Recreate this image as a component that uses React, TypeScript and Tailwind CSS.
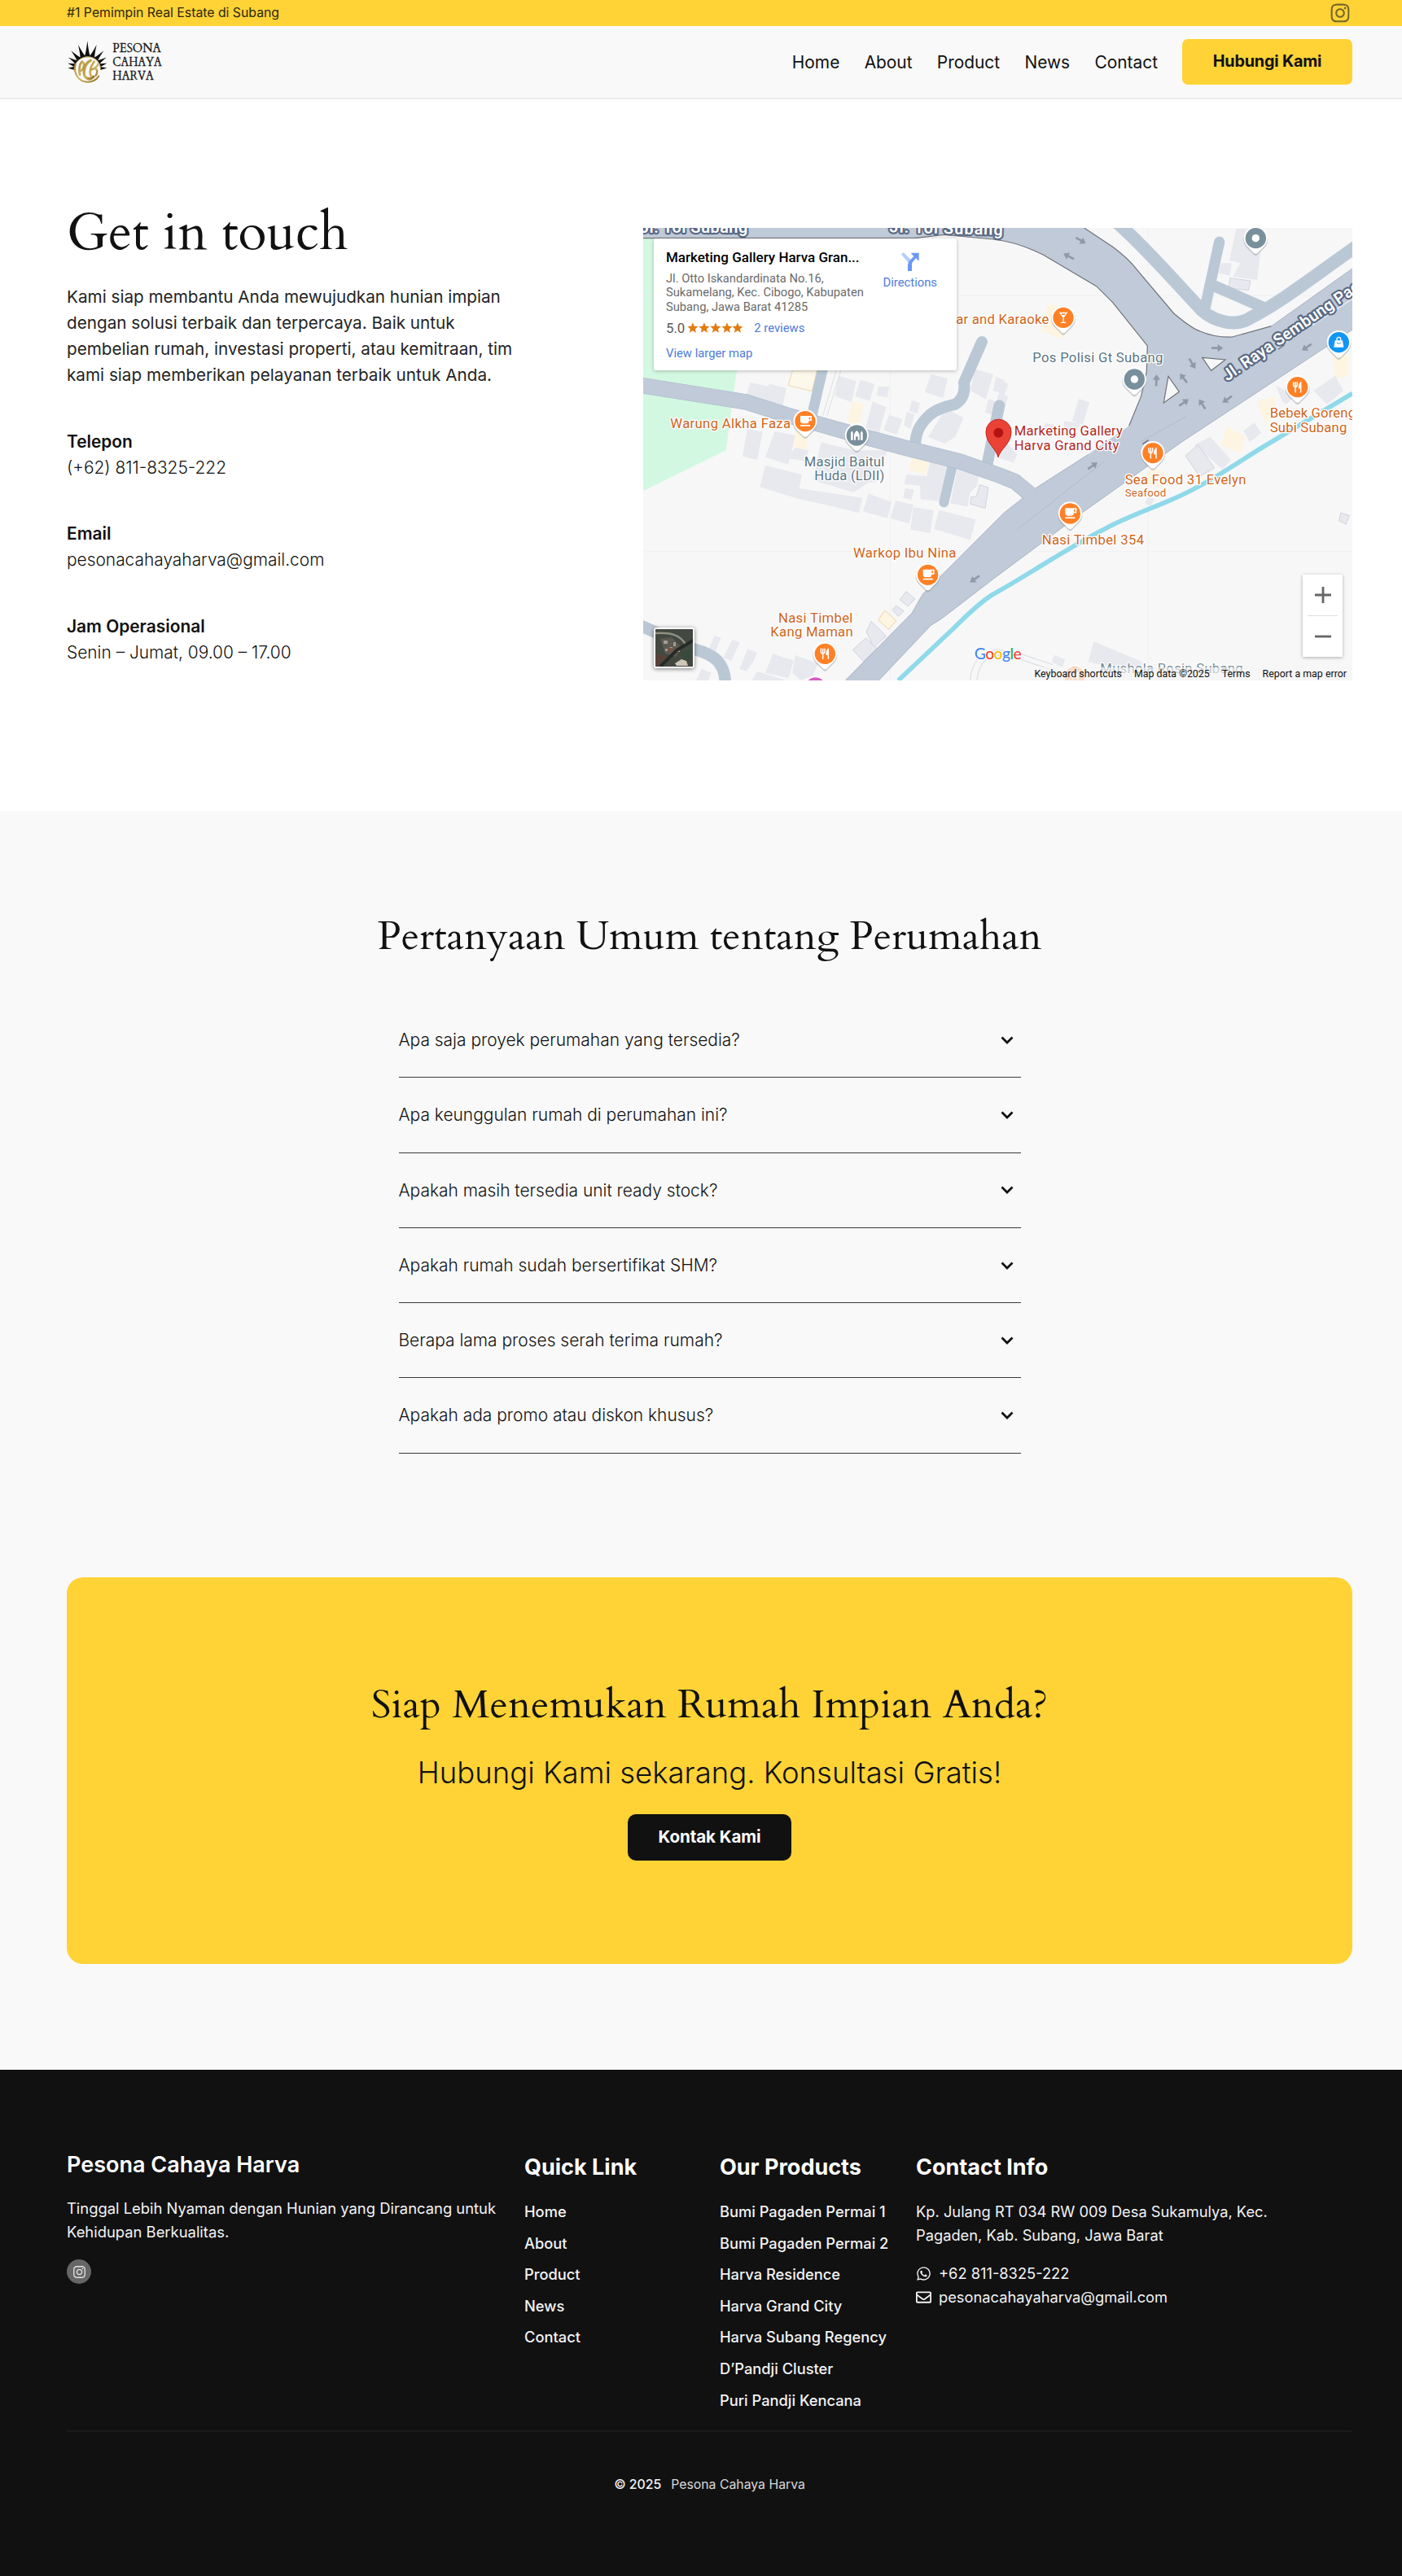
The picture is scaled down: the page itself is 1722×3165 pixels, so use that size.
import React from 'react';
import { FaInstagram, FaWhatsapp, FaRegEnvelope } from 'react-icons/fa';
import { MdStar } from 'react-icons/md';

const NAV = ['Home', 'About', 'Product', 'News', 'Contact'];

const CONTACTS = [
  { label: 'Telepon', value: '(+62) 811-8325-222' },
  { label: 'Email', value: 'pesonacahayaharva@gmail.com' },
  { label: 'Jam Operasional', value: 'Senin – Jumat, 09.00 – 17.00' },
];

const FAQS = [
  'Apa saja proyek perumahan yang tersedia?',
  'Apa keunggulan rumah di perumahan ini?',
  'Apakah masih tersedia unit ready stock?',
  'Apakah rumah sudah bersertifikat SHM?',
  'Berapa lama proses serah terima rumah?',
  'Apakah ada promo atau diskon khusus?',
];

const PRODUCTS = [
  'Bumi Pagaden Permai 1',
  'Bumi Pagaden Permai 2',
  'Harva Residence',
  'Harva Grand City',
  'Harva Subang Regency',
  'D’Pandji Cluster',
  'Puri Pandji Kencana',
];

// Crown of rays: [valley angle, tip angle, tip radius], clockwise from the lower left.
const RAYS: [number, number, number][] = [
  [-94, -87, 72],
  [-81, -74, 75],
  [-67, -59, 82],
  [-51, -42, 90],
  [-32, -21, 95],
  [-11, 0, 103],
  [11, 21, 95],
  [32, 42, 90],
  [51, 59, 82],
  [67, 74, 75],
  [81, 87, 72],
];

function polar(angle: number, r: number) {
  const a = (angle * Math.PI) / 180;
  return `${(112 + r * Math.sin(a)).toFixed(1)} ${(165 - r * Math.cos(a)).toFixed(1)}`;
}

const RAY_PATH =
  `M${polar(-94, 50)} ` +
  RAYS.map(([valley, tip, r], i) => {
    const next = i < RAYS.length - 1 ? RAYS[i + 1][0] : 94;
    const left = tip - (tip - valley) * 0.45;
    const right = tip + (next - tip) * 0.45;
    return `Q${polar(left, 60)} ${polar(tip, r)} Q${polar(right, 60)} ${polar(next, 50)}`;
  }).join(' ') +
  ` A48 48 0 0 0 ${polar(-94, 48)}Z`;

function Logo() {
  return (
    <svg className="block h-[54px] w-[119px]" viewBox="36 58 357 162">
      <defs>
        <linearGradient id="gold" x1="0" y1="0" x2="1" y2="1">
          <stop offset="0" stopColor="#a98a3c" />
          <stop offset="0.5" stopColor="#d0b25c" />
          <stop offset="1" stopColor="#93722a" />
        </linearGradient>
      </defs>
      <path fill="#111" d={RAY_PATH} />
      <g fill="none" stroke="url(#gold)" strokeLinecap="round">
        <path strokeWidth="3" d="M63 172 C62 138 88 121 114 121 C142 121 160 142 161 168" />
        <path strokeWidth="6" d="M68 148 C60 180 78 212 112 213 C132 213 146 204 154 192" />
        <path strokeWidth="8" d="M84 186 C80 166 84 146 92 138 C104 142 100 164 88 172" />
        <path strokeWidth="10" d="M124 134 C100 146 90 190 112 200 C120 203 128 200 134 194" />
        <path strokeWidth="8" d="M137 138 C124 156 120 176 124 190" />
        <path strokeWidth="7" d="M152 146 C148 158 138 164 128 168 M140 164 C150 166 150 180 142 190" />
      </g>
      <g className="font-['Cardo','Liberation_Serif',serif]" fill="#151515" stroke="#151515" strokeWidth="0.8" fontSize="43">
        <text x="205" y="102" textLength="178" lengthAdjust="spacingAndGlyphs">PESONA</text>
        <text x="205" y="154" textLength="181" lengthAdjust="spacingAndGlyphs">CAHAYA</text>
        <text x="205" y="206" textLength="151" lengthAdjust="spacingAndGlyphs">HARVA</text>
      </g>
    </svg>
  );
}

type Kind = 'cup' | 'fork' | 'drink' | 'dot' | 'mosque' | 'bag' | 'none';

const PIN_FILL: Record<Kind, string> = {
  cup: '#ff8126',
  fork: '#ff8126',
  drink: '#ff8126',
  dot: '#78909c',
  mosque: '#78909c',
  bag: '#1196f5',
  none: '#d45bc4',
};

function Pin({ x, y, kind }: { x: number; y: number; kind: Kind }) {
  return (
    <g transform={`translate(${x} ${y})`}>
      <path d="M-45 2 A45 45 0 1 1 45 2 C45 28 20 40 8 56 Q0 64 -8 56 C-20 40 -45 28 -45 2Z" fill="#8f959c" opacity="0.45" transform="translate(0 4)" />
      <path d="M-44 0 A44 44 0 1 1 44 0 C44 26 20 38 8 54 Q0 60 -8 54 C-20 38 -44 26 -44 0Z" fill="#fff" />
      <circle r="38" fill={PIN_FILL[kind]} />
      {kind === 'cup' && (
        <g fill="#fff">
          <path d="M-18 -20 H24 V-2 H14 Q14 8 4 8 H-8 Q-18 8 -18 -2Z" />
          <path d="M14 -15 H19 V-7 H14Z" fill="#ff8126" />
          <rect x="-18" y="13" width="36" height="5" />
        </g>
      )}
      {kind === 'fork' && (
        <g fill="none" stroke="#fff" strokeWidth="4.5" strokeLinecap="round">
          <path d="M-15 -18 V-8 Q-15 -1 -8 -1 Q-1 -1 -1 -8 V-18 M-8 -18 V18" />
          <path d="M12 18 V-17 Q5 -12 6 3 H12" fill="#fff" />
        </g>
      )}
      {kind === 'drink' && (
        <path d="M-16 -20 H16 L2 0 V16 H9 V20 H-9 V16 H-2 V0Z M-8 -15 L-5 -10 H5 L8 -15Z" fill="#fff" fillRule="evenodd" />
      )}
      {kind === 'dot' && <circle r="14" fill="#fff" />}
      {kind === 'mosque' && (
        <path d="M-22 17 V-10 L-18 -17 L-14 -10 V17Z M14 17 V-10 L18 -17 L22 -10 V17Z M-10 17 V-4 Q-8 -12 0 -18 Q8 -12 10 -4 V17 H4 V6 Q0 0 -4 6 V17Z" fill="#fff" />
      )}
      {kind === 'bag' && (
        <>
          <path d="M-14 -7 H14 L18 18 H-18Z" fill="#fff" />
          <path d="M-7 -6 V-12 Q-7 -19 0 -19 Q7 -19 7 -12 V-6" fill="none" stroke="#fff" strokeWidth="4" />
          <path d="M-7 1 Q0 9 7 1" fill="none" stroke="#1196f5" strokeWidth="3" />
        </>
      )}
    </g>
  );
}

const BUILDINGS = [
  '395,570 465,585 450,632 380,615',
  '465,575 528,590 512,665 440,645',
  '722,545 785,565 768,642 706,620',
  '800,560 852,575 835,638 780,620',
  '866,585 906,585 900,625 860,618',
  '1060,540 1122,555 1105,628 1038,605',
  '1222,520 1290,540 1262,632 1205,600',
  '1300,550 1330,560 1330,610 1288,600',
  '1272,630 1330,650 1320,700 1260,680',
  '990,635 1020,645 1010,685 980,675',
  '845,640 895,660 870,755 820,735',
  '905,690 955,705 935,762 885,745',
  '970,678 1000,688 985,740 960,728',
  '1115,665 1180,700 1150,770 1110,795 1050,770',
  '383,740 440,752 420,855 366,842',
  '485,750 560,765 535,872 450,845',
  '640,770 660,770 655,775 630,765',
  '560,810 610,820 600,860 530,848',
  '655,790 780,820 900,820 885,860 865,935 830,940 775,975 625,930',
  '450,875 585,910 575,960 808,995 795,1050 560,995 430,955',
  '830,980 915,1010 900,1070 810,1045',
  '930,1005 995,1020 980,1090 910,1070',
  '995,1030 1070,1040 1058,1125 985,1112',
  '1090,1040 1226,1075 1205,1150 1072,1110',
  '1062,840 1135,857 1115,1010 1022,1000 1020,950 962,945 970,910 1045,915',
  '1160,875 1240,900 1230,950 1205,975 1195,1028 1132,1015',
  '965,960 998,965 988,1003 958,995',
  '1310,760 1378,835 1365,865 1300,845',
  '1310,555 1345,575 1330,620 1300,600',
  '1310,610 1345,620 1330,670 1298,655',
  '1605,630 1645,642 1620,725 1580,712',
  '1480,720 1515,725 1505,750 1475,745',
  '1550,712 1612,720 1600,745 1550,735',
  '2185,3 2285,5 2262,192 2172,180 2200,130 2160,120',
  '2130,130 2168,130 2162,176 2120,168',
  '2330,580 2400,620 2370,650 2355,640',
  '2252,718 2278,755 2235,790 2212,748',
  '2550,545 2580,600 2520,650 2470,600',
  '2090,770 2165,855 2135,890 2030,800',
  '2000,840 2050,805 2105,885 2050,920',
  '1860,990 1885,1000 1870,1025 1850,1015',
  '1660,1525 1840,1600 1820,1640 1640,1600',
  '1515,1575 1555,1590 1545,1620 1505,1600',
  '262,1503 287,1510 262,1572 238,1560',
  '328,1518 356,1528 325,1595 295,1585',
  '385,1552 420,1565 405,1600 380,1635 355,1625',
  '478,1570 555,1595 535,1660 450,1640',
  '560,1575 645,1605 625,1650 580,1668 550,1640',
  '420,1635 530,1668 400,1668',
  '215,1625 250,1640 240,1668 195,1668',
];

const OUTLINED = [
  '840,1450 896,1505 850,1545 822,1490',
  '820,1512 862,1550 812,1598 772,1555',
  '970,1340 1002,1368 975,1395 945,1370',
  '932,1392 960,1412 940,1432 918,1408',
  '1240,947 1272,957 1260,1033 1205,1018 1208,992 1228,990',
  '2162,185 2238,195 2230,230 2158,222',
  '2570,1050 2602,1060 2590,1092 2564,1080',
  '2045,800 2105,885 2050,915 1998,840',
];

const CREAM = [
  '550,525 640,525 622,602 535,580',
  '770,640 812,650 795,725 752,715',
  '565,740 610,745 600,820 540,800',
  '990,835 1055,850 1040,910 978,890',
  '1490,280 1560,300 1550,410 1465,380',
  '880,1410 932,1448 905,1480 866,1445',
  '2150,730 2220,770 2200,830 2130,800',
  '2260,640 2330,620 2330,690 2290,720',
  '2540,460 2600,470 2600,540 2550,560',
  '1870,880 1920,900 1905,960 1840,940',
];

const ARROWS: [number, number, number][] = [
  [1612, 46, 30],
  [1568, 105, 208],
  [2115, 443, 0],
  [2023, 500, 58],
  [1991, 554, 232],
  [1891, 562, 272],
  [1992, 644, 325],
  [2060, 650, 237],
  [2152, 632, 145],
  [2445, 440, 145],
  [1656, 877, 325],
  [1222, 1294, 145],
];

function MapDrawing() {
  return (
    <svg className="block h-[556px] w-[871px] font-['Roboto',sans-serif]" viewBox="0 0 2613 1668">
      <rect width="2613" height="1668" fill="#f7f7f7" />
      <path d="M0 38 H350 L345 525 L305 820 L0 970Z" fill="#d3f8e2" />
      <path d="M910 0 V1668 M1860 0 V1668 M0 1193 H2613 M0 250 H2613" stroke="#efeff1" strokeWidth="2" />
      {CREAM.map((p) => (
        <polygon key={p} points={p} fill="#fdf5e1" />
      ))}
      {BUILDINGS.map((p) => (
        <polygon key={p} points={p} fill="#e8e9ef" />
      ))}
      {OUTLINED.map((p) => (
        <polygon key={p} points={p} fill="#e8e9ef" stroke="#d2d4de" strokeWidth="3" />
      ))}
      <polygon points="550,525 640,525 622,602 535,580" fill="#fdf8ea" stroke="#f1d9b5" strokeWidth="3" />
      <polygon points="891,1410 932,1448 905,1480 866,1445" fill="#fdf5e1" stroke="#f1d0ae" strokeWidth="3" />
      <path d="M712 525 L662 692 M728 525 L678 692" stroke="#dcdfe5" strokeWidth="3" />
      <path d="M1205 1668 C1210 1600 1240 1560 1310 1555 L1390 1570 L1510 1610 M1230 1668 C1235 1610 1260 1580 1310 1575 L1390 1590 L1500 1628" fill="none" stroke="#dfe2e6" strokeWidth="4" />

      <path
        d="M2613 610 L2280 810 C2190 865 2070 950 1950 1000 C1880 1032 1780 1066 1700 1110 C1580 1170 1400 1290 1290 1350 C1240 1380 1190 1430 1150 1470 L940 1668"
        fill="none"
        stroke="#8fd9ea"
        strokeWidth="17"
      />

      <g fill="none" stroke="#bac8d6" strokeLinecap="round" strokeLinejoin="round">
        <path strokeWidth="38" d="M664 510 L622 690" />
        <path strokeWidth="42" d="M1248 420 L1182 570 Q1190 625 1150 650 Q1080 665 1050 695 C1010 735 1005 760 1000 815" />
        <path strokeWidth="42" d="M1312 655 L1268 870" />
        <path strokeWidth="36" d="M1142 865 L1108 1012" />
        <path strokeWidth="48" d="M1745 -20 C1850 70 1960 200 2060 305 C2110 350 2190 365 2240 330 C2340 280 2440 200 2640 60" />
        <path strokeWidth="40" d="M2123 52 L2068 305" />
        <path strokeWidth="42" d="M2095 210 L2290 295" />
        <path strokeWidth="44" d="M-10 1466 L185 1552 C260 1572 305 1600 303 1690" />
      </g>
      <path d="M-10 580 L380 642 L530 690 L770 758 L970 812 L1170 862 L1320 915 L1370 935 L1430 985" fill="none" stroke="#a9b8c9" strokeWidth="58" />
      <path d="M-10 580 L380 642 L530 690 L770 758 L970 812 L1170 862 L1320 915 L1370 935 L1440 990" fill="none" stroke="#c0cad8" strokeWidth="55" />
      <path
        d="M0 0 H1625 L1730 70 Q1790 115 1820 155 L1955 315 Q2020 370 2050 380 Q2110 405 2170 402 L2315 362 L2613 150 V375 L1980 792 L1620 1048 L1290 1294 L1100 1440 L1060 1465 L868 1668 H745 L990 1420 L1030 1350 L1330 1050 L1400 995 L1445 960 L1640 835 L1790 730 L1835 620 L1855 530 L1858 435 L1730 275 L1670 215 L1475 100 Q1380 52 1290 42 L1110 25 L1000 38 H0Z"
        fill="#c1cad8"
      />
      <g fill="none" stroke="#6f7378" strokeWidth="3.5">
        <path d="M0 38 H1000 L1110 25 L1290 42 Q1380 52 1475 100 L1670 215 L1730 275 L1858 435 L1855 530 L1835 620 L1790 730" />
        <path d="M1625 0 L1730 70 Q1790 115 1820 155 L1955 315 Q2020 370 2050 380 Q2110 405 2170 402 L2315 362" />
      </g>
      <path d="M2315 362 L2613 150 M2613 375 L1980 792 L1620 1048 L1290 1294 L1100 1440 L1060 1465 L868 1668 M745 1668 L990 1420 L1030 1350 L1330 1050 L1400 995 M1445 960 L1640 835" fill="none" stroke="#aab4c4" strokeWidth="3" />
      <path d="M2000 695 L1830 790 M1700 860 L1380 1110" stroke="#b1bccb" strokeWidth="3" />
      <path d="M2613 262 L2340 440" stroke="#e6eaf0" strokeWidth="5" />
      <path d="M2340 448 L2363 431 M1840 797 L1862 782" stroke="#6f7378" strokeWidth="4" />
      <path d="M2060 478 L2145 486 L2093 526Z M1935 547 L1975 604 L1918 645Z" fill="#f7f7f7" stroke="#6f7378" strokeWidth="3.5" />
      {ARROWS.map(([x, y, r]) => (
        <path key={`${x}-${y}`} transform={`translate(${x} ${y}) rotate(${r})`} d="M-21 -4 H2 V-14 L22 0 L2 14 V4 H-21Z" fill="#8f9aa8" />
      ))}

      <g fill="#fff" stroke="#5a6a85" strokeWidth="13" strokeLinejoin="round" paintOrder="stroke" fontWeight="600" fontSize="60">
        <text x="-12" y="19" textLength="397">Jl. Tol Subang</text>
        <text x="907" y="16" textLength="418" transform="rotate(1.5 907 16)">Jl. Tol Subang</text>
        <text x="2152" y="566" textLength="602" transform="rotate(-34.5 2152 566)">Jl. Raya Sembung Pag</text>
      </g>

      <Pin x={1548} y={331} kind="drink" />
      <Pin x={2257} y={38} kind="dot" />
      <Pin x={1810} y={558} kind="dot" />
      <Pin x={2563} y={422} kind="bag" />
      <Pin x={2411} y={587} kind="fork" />
      <Pin x={597} y={713} kind="cup" />
      <Pin x={787} y={765} kind="mosque" />
      <Pin x={1878} y={830} kind="fork" />
      <Pin x={1573} y={1053} kind="cup" />
      <Pin x={1049} y={1279} kind="cup" />
      <Pin x={670} y={1570} kind="fork" />
      <Pin x={635} y={1695} kind="none" />
      <g opacity="0.5">
        <Pin x={1590} y={1655} kind="fork" />
      </g>

      <path d="M1308 845 C1302 815 1263 795 1263 752 A46 46 0 0 1 1356 752 C1356 795 1316 815 1308 845Z" fill="#ea4335" stroke="#c5221f" strokeWidth="3" />
      <circle cx="1309" cy="755" r="18" fill="#b31412" />

      <g stroke="#fff" strokeWidth="8" strokeLinejoin="round" paintOrder="stroke" fontSize="50">
        <g fill="#d0651b">
          <text x="1153" y="355" textLength="342">ar and Karaoke</text>
          <text x="100" y="738" textLength="443">Warung Alkha Faza</text>
          <text x="2309" y="700" textLength="316">Bebek Goreng</text>
          <text x="2309" y="752" textLength="284">Subi Subang</text>
          <text x="1775" y="946" textLength="446">Sea Food 31 Evelyn</text>
          <text x="1775" y="989" textLength="152" fontSize="40">Seafood</text>
          <text x="1469" y="1168" textLength="376">Nasi Timbel 354</text>
          <text x="774" y="1215" textLength="379">Warkop Ibu Nina</text>
          <text x="498" y="1454" textLength="274">Nasi Timbel</text>
          <text x="469" y="1505" textLength="304">Kang Maman</text>
        </g>
        <g fill="#5b7582">
          <text x="1435" y="495" textLength="480">Pos Polisi Gt Subang</text>
          <text x="593" y="878" textLength="296">Masjid Baitul</text>
          <text x="631" y="930" textLength="258">Huda (LDII)</text>
          <text x="1684" y="1642" textLength="526" opacity="0.8">Mushola Rosin Subang</text>
        </g>
        <g fill="#b3261e">
          <text x="1367" y="766" textLength="400">Marketing Gallery</text>
          <text x="1367" y="818" textLength="386">Harva Grand City</text>
        </g>
      </g>
      <text x="1220" y="1589" textLength="174" fontSize="58" fontWeight="500" stroke="#fff" strokeWidth="5" paintOrder="stroke" className="font-['Lato',sans-serif]">
        <tspan fill="#4285f4">G</tspan>
        <tspan fill="#ea4335">o</tspan>
        <tspan fill="#fbbc05">o</tspan>
        <tspan fill="#4285f4">g</tspan>
        <tspan fill="#34a853">l</tspan>
        <tspan fill="#ea4335">e</tspan>
      </text>
    </svg>
  );
}

function MapEmbed() {
  return (
    <div className="relative h-[556px] w-[871px] shrink-0 overflow-hidden font-['Roboto',sans-serif]">
      <MapDrawing />
      <div className="absolute top-[13px] left-[13px] flex h-[162px] w-[372px] justify-between rounded-[2px] bg-white pt-[13px] pr-[24px] pl-[15px] shadow-[0_1px_4px_rgba(0,0,0,0.25)]">
        <div className="whitespace-nowrap">
          <div className="text-[17px] leading-5 font-medium text-black">Marketing Gallery Harva Gran...</div>
          <div className="mt-2 text-[14.7px] leading-[17.4px] text-[#6b6b6b]">
            Jl. Otto Iskandardinata No.16,
            <br />
            Sukamelang, Kec. Cibogo, Kabupaten
            <br />
            Subang, Jawa Barat 41285
          </div>
          <div className="mt-[7px] flex h-5 items-center leading-5">
            <span className="text-[16.8px] text-[#5b5b5b]">5.0</span>
            <span className="ml-[3px] flex text-[#e37b12]">
              {[0, 1, 2, 3, 4].map((i) => (
                <MdStar key={i} className="-mx-px size-[15.8px]" />
              ))}
            </span>
            <span className="ml-[13px] text-[14.8px] text-[#4f7bdc]">2 reviews</span>
          </div>
          <div className="mt-[12px] text-[14.8px] leading-[18px] text-[#4f7bdc]">View larger map</div>
        </div>
        <div className="flex flex-col items-center pt-[4px]">
          <svg className="h-[23px] w-[22px]" viewBox="0 0 66 69">
            <path d="M0 8 L8 0 L34 26 V42 H30Z" fill="#b3cdfb" />
            <path d="M24 69 V46 Q24 36 32 29 L46 15 L35 2 H65 V32 L54 22 L42 35 Q39 39 39 46 V69Z" fill="#6b98f5" />
          </svg>
          <span className="mt-[5px] text-[14.8px] leading-[18px] text-[#4f7bdc]">Directions</span>
        </div>
      </div>

      <div className="absolute top-[491px] left-[13px] size-[50px] rounded-[3px] border-2 border-white bg-[#3d4039] shadow-[0_1px_5px_rgba(0,0,0,0.5)]">
        <svg className="size-full" viewBox="0 0 46 46">
          <path d="M0 0H46V46H0Z" fill="#434840" />
          <path d="M6 12 L20 10 L30 20 L26 34 L12 30Z" fill="#5d5a53" />
          <path d="M10 14h5v4h-5zM17 22h4v3h-4zM22 16h3v5h-3zM12 24h3v3h-3zM26 26h4v2h-4z" fill="#a39c94" />
          <path d="M16 22 l6 2 l-2 4 l-5-2z" fill="#7c5346" />
          <path d="M0 30 L16 34 L8 46 H0Z" fill="#57423a" />
          <path d="M0 5 C18 4 30 6 38 20" fill="none" stroke="#8f9083" strokeWidth="2.5" />
          <path d="M6 46 L26 26 L46 14" fill="none" stroke="#252b27" strokeWidth="4" />
          <path d="M32 30 L44 24 V36 L34 40Z" fill="#394a3c" />
          <path d="M24 42 l8 -5 l6 2 l2 6 h-14z" fill="#cfc6b8" />
        </svg>
      </div>

      <div className="absolute top-[426px] right-3 flex h-[101px] w-[49px] flex-col items-center justify-between bg-white py-[15px] shadow-[0_1px_4px_rgba(0,0,0,0.3)]">
        <svg className="size-5" viewBox="0 0 20 20">
          <path d="M0 10H20M10 0V20" stroke="#666" strokeWidth="2.8" />
        </svg>
        <span className="h-px w-[37px] bg-[#dedede]" />
        <svg className="size-5" viewBox="0 0 20 20">
          <path d="M0 10H20" stroke="#666" strokeWidth="2.8" />
        </svg>
      </div>

      <div className="absolute right-0 bottom-0 flex h-[16px] items-center gap-[15px] bg-[#f5f5f5]/60 pr-[7px] pl-[6px] text-[12.4px] whitespace-nowrap text-[#111]">
        <span>Keyboard shortcuts</span>
        <span>Map data ©2025</span>
        <span>Terms</span>
        <span>Report a map error</span>
      </div>
    </div>
  );
}

function FooterLinks({ title, items }: { title: string; items: string[] }) {
  return (
    <div className="pt-[3px]">
      <h3 className="text-[27px] leading-[34px] font-bold text-white">{title}</h3>
      <ul className="mt-[18px] text-[18.3px] leading-[38.6px] font-medium whitespace-nowrap text-[#f3f3f3]">
        {items.map((t) => (
          <li key={t}>{t}</li>
        ))}
      </ul>
    </div>
  );
}

export default function App() {
  return (
    <div className="w-[1722px] overflow-hidden bg-white font-['Inter',sans-serif] text-[#111]">
      <div className="flex h-8 items-center justify-between bg-[#ffd336] pr-[63px] pl-[82px]">
        <span className="text-[15.8px] leading-8 text-[#2c2711]">#1 Pemimpin Real Estate di Subang</span>
        <FaInstagram className="size-[26px] text-[#74652a]" />
      </div>

      <header className="flex h-[90px] items-center justify-between border-b-2 border-[#ebebeb] bg-[#f9f9f9] pr-[61px] pl-[82px]">
        <Logo />
        <div className="flex items-center gap-[30px]">
          <nav className="flex gap-[30.3px] pt-px text-[20.9px] leading-8">
            {NAV.map((n) => (
              <a key={n}>{n}</a>
            ))}
          </nav>
          <a className="flex h-14 w-[209px] items-center justify-center rounded-[7px] bg-[#ffd336] text-[19.8px] font-bold tracking-[-0.2px]">Hubungi Kami</a>
        </div>
      </header>

      <section className="flex h-[874px] pr-[61px] pl-[82px]">
        <div className="w-[708px] pt-[124px]">
          <h1 className="font-['Cardo','Liberation_Serif',serif] text-[64.5px] leading-[80px]">Get in touch</h1>
          <p className="mt-[23px] w-[570px] text-[20.7px] leading-8 text-[#242424]">
            Kami siap membantu Anda mewujudkan hunian impian dengan solusi terbaik dan terpercaya. Baik untuk pembelian rumah, investasi properti, atau kemitraan, tim kami siap memberikan
            pelayanan terbaik untuk Anda.
          </p>
          <dl className="mt-[49.5px] flex flex-col gap-[49.5px] text-[20.9px] leading-8">
            {CONTACTS.map((c) => (
              <div key={c.label}>
                <dt className="font-semibold">{c.label}</dt>
                <dd className="font-light">{c.value}</dd>
              </div>
            ))}
          </dl>
        </div>
        <div className="pt-[158px]">
          <MapEmbed />
        </div>
      </section>

      <section className="h-[1547px] bg-[#f9f9f9] pt-[119px] pr-[61px] pl-[82px]">
        <h2 className="text-center font-['Cardo','Liberation_Serif',serif] text-[49.3px] leading-[72px] whitespace-nowrap">Pertanyaan Umum tentang Perumahan</h2>
        <div className="mx-auto mt-[45px] w-[764px]">
          {FAQS.map((q) => (
            <div key={q} className="flex h-[92.3px] items-center justify-between border-b border-[#3a3a3a] pr-[9px] text-[20.95px] font-light">
              <span>{q}</span>
              <svg className="h-[10px] w-4" viewBox="0 0 16 10">
                <path d="M1.5 1.5 L8 8 L14.5 1.5" fill="none" stroke="#111" strokeWidth="2.8" />
              </svg>
            </div>
          ))}
        </div>
        <div className="mt-[152px] flex h-[475px] flex-col items-center rounded-[20px] bg-[#ffd336] pt-[121px]">
          <h2 className="font-['Cardo','Liberation_Serif',serif] text-[49.3px] leading-[72px] whitespace-nowrap">Siap Menemukan Rumah Impian Anda?</h2>
          <p className="mt-[21px] text-[36.5px] leading-[52px] font-light">Hubungi Kami sekarang. Konsultasi Gratis!</p>
          <a className="mt-[25px] flex h-[57px] w-[201px] items-center justify-center rounded-[10px] bg-[#111] text-[20.6px] font-bold tracking-[-0.1px] text-white">Kontak Kami</a>
        </div>
      </section>

      <footer className="h-[622px] bg-[#111] pt-[100px] pr-[61px] pl-[82px] text-white">
        <div className="grid h-[343px] grid-cols-[562px_240px_241px_1fr]">
          <div>
            <h3 className="text-[27px] leading-[34px] font-semibold">Pesona Cahaya Harva</h3>
            <p className="mt-[22px] w-[540px] text-[18.4px] leading-[29px] text-[#f3f3f3]">Tinggal Lebih Nyaman dengan Hunian yang Dirancang untuk Kehidupan Berkualitas.</p>
            <span className="mt-[19px] flex size-[30px] items-center justify-center rounded-full bg-[#666]">
              <FaInstagram className="size-[17px] text-[#e4e4e4]" />
            </span>
          </div>
          <FooterLinks title="Quick Link" items={NAV} />
          <FooterLinks title="Our Products" items={PRODUCTS} />
          <div className="pt-[3px] text-[18.3px] leading-[28.7px] text-[#f3f3f3]">
            <h3 className="text-[27px] leading-[34px] font-bold text-white">Contact Info</h3>
            <p className="mt-[23px] w-[450px]">Kp. Julang RT 034 RW 009 Desa Sukamulya, Kec. Pagaden, Kab. Subang, Jawa Barat</p>
            <div className="mt-[19px] flex items-center gap-[9px]">
              <FaWhatsapp className="size-[19px]" />
              <span>+62 811-8325-222</span>
            </div>
            <div className="flex items-center gap-[9px]">
              <FaRegEnvelope className="size-[19px]" />
              <span>pesonacahayaharva@gmail.com</span>
            </div>
          </div>
        </div>
        <div className="flex h-[179px] justify-center gap-3 border-t-2 border-[#1a1a1a] pt-[49px] text-[15.8px] leading-8">
          <span className="font-medium text-[#f3f3f3]">© 2025</span>
          <span className="text-[#d9d9d9]">Pesona Cahaya Harva</span>
        </div>
      </footer>
    </div>
  );
}
